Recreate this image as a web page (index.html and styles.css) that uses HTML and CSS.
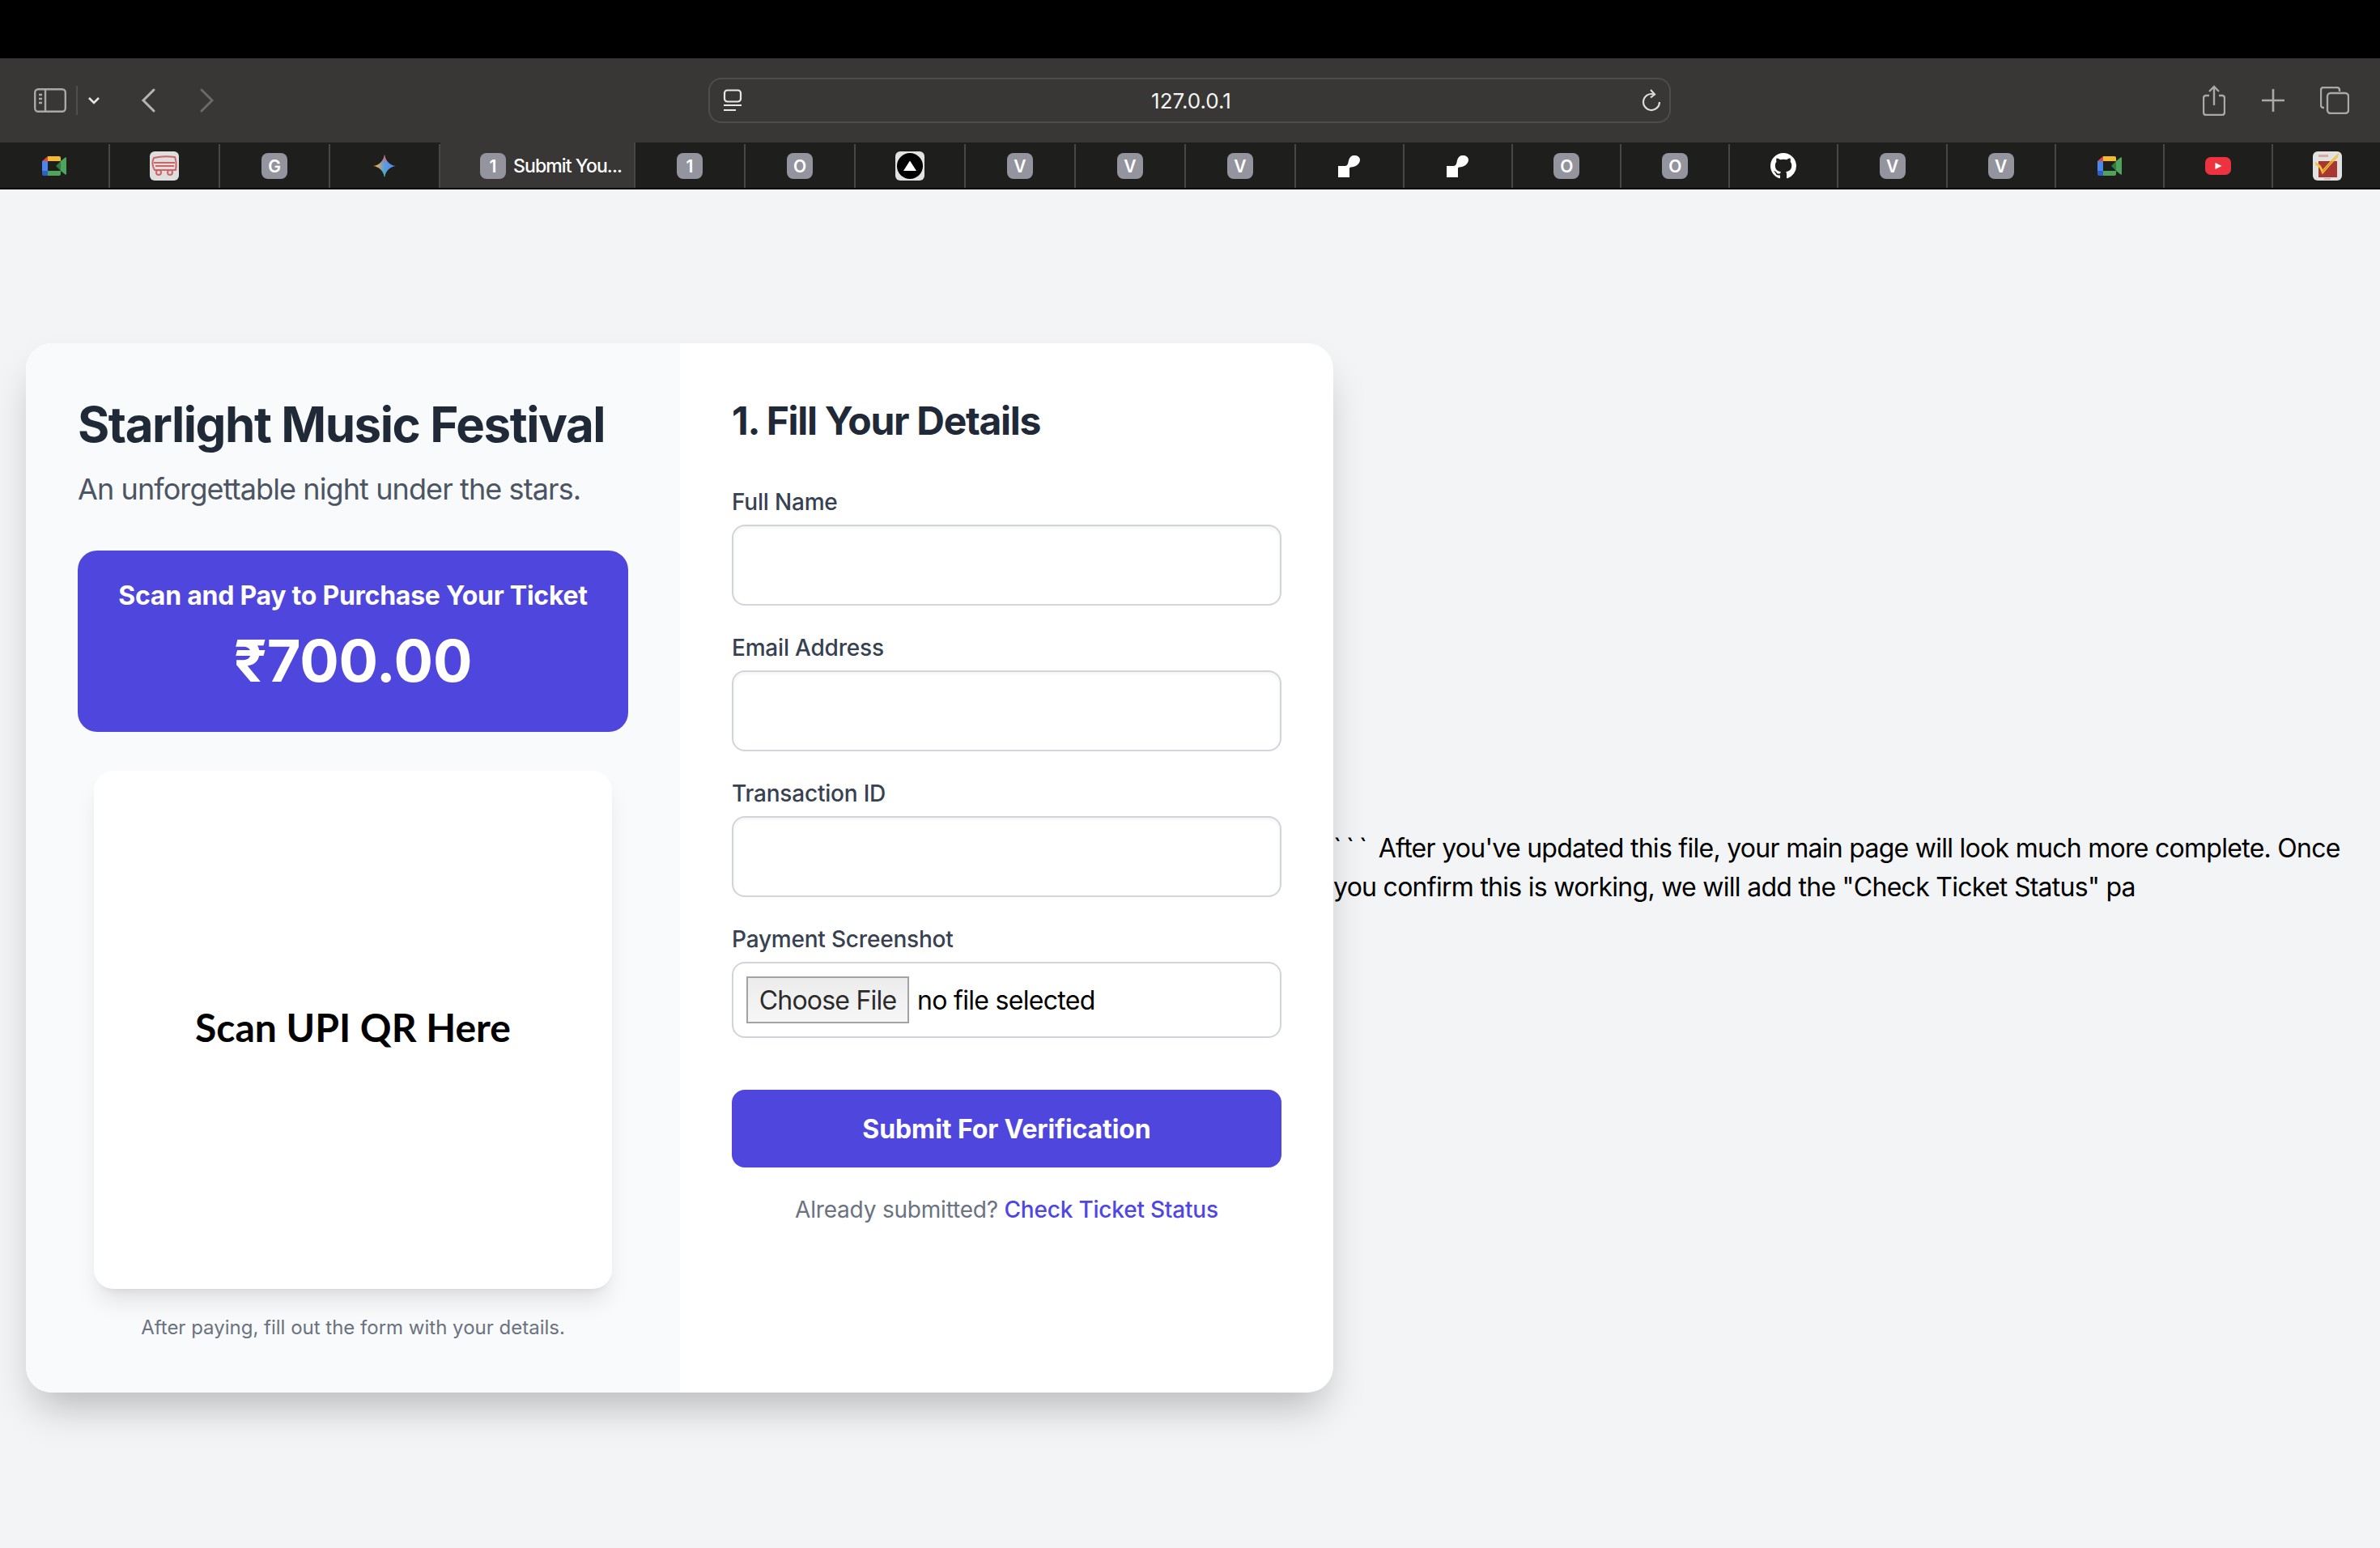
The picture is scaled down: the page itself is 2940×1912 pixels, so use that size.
FILE: index.html
```html
<!DOCTYPE html>
<html>

<head>
  <meta charset="utf-8" />
  <title>Starlight Music Festival</title>
  <link rel="stylesheet" href="styles.css">
</head>

<body>
  <svg class="sprites" xmlns="http://www.w3.org/2000/svg">
    <symbol id="meet" viewBox="0 0 30 24">
      <path fill="#e2483a" d="M7 0 0 6h7z" />
      <path fill="#f5bb2c" d="M7 0h14a2 2 0 0 1 2 2v4H7z" />
      <path fill="#4a86ee" d="M0 6h7v12H0z" />
      <path fill="#2f5fc4" d="M0 18h7v6H2a2 2 0 0 1-2-2z" />
      <path fill="#4ea45a" d="M7 18h16v4a2 2 0 0 1-2 2H7z" />
      <path fill="#2f7d42" d="m17 12 6-6v12z" />
      <path fill="#4ea45a" d="m23 6 5.500-4.500c.7-.5 1.500-.2 1.500.7v19.600c0 .9-.8 1.200-1.500.7L23 18z" />
    </symbol>
    <symbol id="notion" viewBox="0 0 28 27">
      <path fill="#fff" d="M17 .5c-3 1.500-4 5-4.500 8-.4 2.500-1.500 4-3.500 4.500H0v14h14V16c0-1 1-1.500 2-1.500 5 0 11-4 11-9C27 1.500 22-1.500 17 .5z" />
    </symbol>
  </svg>

  <header class="chrome">
    <div class="toolbar">
      <div class="nav-group">
        <svg class="ico-sidebar" viewBox="0 0 40 30" fill="none" stroke="#a9a9a7" stroke-width="2.4">
          <rect x="1.2" y="1.2" width="37.6" height="27.600" rx="4" />
          <path d="M14 1.200v27.600M6 8h4M6 13h4M6 18h4" />
        </svg>
        <span class="nav-divider"></span>
        <svg class="ico-down" viewBox="0 0 16 10" fill="none" stroke="#e6e6e4" stroke-width="2.6">
          <path d="m2 2 6 6 6-6" />
        </svg>
        <svg class="ico-back" viewBox="0 0 18 30" fill="none" stroke="#b5b5b3" stroke-width="3" stroke-linecap="round">
          <path d="M16 2 3 15l13 13" />
        </svg>
        <svg class="ico-forward" viewBox="0 0 18 30" fill="none" stroke="#6a6a68" stroke-width="3" stroke-linecap="round">
          <path d="m2 2 13 13L2 28" />
        </svg>
      </div>

      <div class="url-bar">
        <svg class="ico-reader" viewBox="0 0 24 28" fill="none" stroke="#e8e8e6" stroke-width="2.2">
          <rect x="2" y="1.5" width="20" height="14" rx="3.5" />
          <path d="M1 20h22M1 26h15" />
        </svg>
        <span class="url-text">127.0.0.1</span>
        <svg class="ico-reload" viewBox="0 0 24 28" fill="none" stroke="#dcdcda" stroke-width="2.2">
          <path d="M15 6.500A10 10 0 1 0 22 16" />
          <path d="m11 1 5 5.500-5 4" />
        </svg>
      </div>

      <div class="actions">
        <svg class="ico-share" viewBox="0 0 28 38" fill="none" stroke="#a9a9a7" stroke-width="2.4">
          <path d="M14 25V2M8 8l6-6 6 6" />
          <path d="M8 13H4a3 3 0 0 0-3 3v18a3 3 0 0 0 3 3h20a3 3 0 0 0 3-3V16a3 3 0 0 0-3-3h-4" />
        </svg>
        <svg class="ico-plus" viewBox="0 0 28 28" fill="none" stroke="#a9a9a7" stroke-width="2.6">
          <path d="M14 0v28M0 14h28" />
        </svg>
        <svg class="ico-tabs" viewBox="0 0 36 34" fill="none" stroke="#a9a9a7" stroke-width="2.4">
          <path d="M5 26H4a3 3 0 0 1-3-3V4a3 3 0 0 1 3-3h17a3 3 0 0 1 3 3v2" />
          <rect x="9" y="8" width="26" height="25" rx="4" />
        </svg>
      </div>
    </div>

    <nav class="tabs">
      <div class="tab"><svg class="fav-meet"><use href="#meet" /></svg></div>
      <div class="tab">
        <svg class="fav-tile" viewBox="0 0 36 36">
          <rect width="36" height="36" rx="6" fill="#dedede" />
          <g fill="none" stroke="#d06464" stroke-width="2">
            <path d="M5 8c8-2 18-2 26-1 2 5 2 10 1 16H6C3 18 3 12 5 8z" />
            <path d="M5 14h26M7 18h23" />
            <circle cx="11" cy="26" r="3" />
            <circle cx="25" cy="26" r="3" />
          </g>
        </svg>
      </div>
      <div class="tab"><span class="badge">G</span></div>
      <div class="tab">
        <svg class="fav-gemini" viewBox="0 0 28 28">
          <defs>
            <linearGradient id="gem-h">
              <stop offset="0.1" stop-color="#f2b33d" />
              <stop offset="0.5" stop-color="#5a9be8" />
              <stop offset="1" stop-color="#4f86ec" />
            </linearGradient>
            <linearGradient id="gem-v" x1="0" y1="0" x2="0" y2="1">
              <stop offset="0.05" stop-color="#e8655a" />
              <stop offset="0.4" stop-color="#e8655a" stop-opacity="0" />
              <stop offset="0.6" stop-color="#3fb8a0" stop-opacity="0" />
              <stop offset="0.95" stop-color="#3fb8a0" />
            </linearGradient>
          </defs>
          <path fill="url(#gem-h)" d="M14 0c1 7 6 13 14 14-8 1-13 7-14 14-1-7-6-13-14-14C8 13 13 7 14 0z" />
          <path fill="url(#gem-v)" d="M14 0c1 7 6 13 14 14-8 1-13 7-14 14-1-7-6-13-14-14C8 13 13 7 14 0z" />
        </svg>
      </div>
      <div class="tab tab-active"><span class="badge">1</span><span class="tab-title">Submit You...</span></div>
      <div class="tab"><span class="badge">1</span></div>
      <div class="tab"><span class="badge">O</span></div>
      <div class="tab">
        <svg class="fav-tile" viewBox="0 0 36 36">
          <rect width="36" height="36" rx="6" fill="#e2e2e2" />
          <circle cx="18" cy="18" r="16" fill="#000" />
          <path fill="#fff" d="M18 11.500 26 24H10z" />
        </svg>
      </div>
      <div class="tab"><span class="badge">V</span></div>
      <div class="tab"><span class="badge">V</span></div>
      <div class="tab"><span class="badge">V</span></div>
      <div class="tab tab-narrow"><svg class="fav-notion"><use href="#notion" /></svg></div>
      <div class="tab tab-narrow"><svg class="fav-notion"><use href="#notion" /></svg></div>
      <div class="tab tab-narrow"><span class="badge">O</span></div>
      <div class="tab tab-narrow"><span class="badge">O</span></div>
      <div class="tab tab-narrow">
        <svg class="fav-github" viewBox="0 0 16 16">
          <path fill="#fff" d="M8 0C3.58 0 0 3.58 0 8c0 3.54 2.29 6.53 5.47 7.59.4.07.55-.17.55-.38 0-.19-.01-.82-.01-1.49-2.01.37-2.53-.49-2.69-.94-.09-.23-.48-.94-.82-1.13-.28-.15-.68-.52-.01-.53.63-.01 1.08.58 1.23.82.72 1.21 1.87.87 2.33.66.07-.52.28-.87.51-1.07-1.78-.2-3.64-.89-3.64-3.95 0-.87.31-1.59.82-2.15-.08-.2-.36-1.02.08-2.12 0 0 .67-.21 2.2.82.64-.18 1.32-.27 2-.27.68 0 1.36.09 2 .27 1.53-1.04 2.2-.82 2.2-.82.44 1.1.16 1.92.08 2.12.51.56.82 1.27.82 2.15 0 3.07-1.87 3.75-3.65 3.95.29.25.54.73.54 1.48 0 1.07-.01 1.93-.01 2.2 0 .21.15.46.55.38A8.013 8.013 0 0016 8c0-4.42-3.58-8-8-8z" />
        </svg>
      </div>
      <div class="tab tab-narrow"><span class="badge">V</span></div>
      <div class="tab tab-narrow"><span class="badge">V</span></div>
      <div class="tab tab-narrow"><svg class="fav-meet"><use href="#meet" /></svg></div>
      <div class="tab tab-narrow">
        <svg class="fav-youtube" viewBox="0 0 32 22">
          <rect width="32" height="22" rx="7" fill="#ee3340" />
          <path fill="#fff" d="m12.500 7 8 4-8 4z" />
        </svg>
      </div>
      <div class="tab tab-narrow">
        <svg class="fav-tile" viewBox="0 0 36 36">
          <rect width="36" height="36" rx="6" fill="#e2e2e2" />
          <path fill="#a8372f" d="M7 12h23v20H7z" />
          <path fill="none" stroke="#f0c23c" stroke-width="1.5" d="M3 14c4 1 7 4 9 10C18 17 25 9 32 3M3 16c4 1 7 4 9 11C18 20 25 12 31 6" />
          <path fill="#d9a9a5" d="M7 4h12v3H7zM14 33h8v1.500h-8z" />
        </svg>
      </div>
    </nav>
  </header>

  <main class="page">
    <div class="card">
      <section class="info-panel">
        <h1 class="event-title">Starlight Music Festival</h1>
        <p class="event-sub">An unforgettable night under the stars.</p>

        <div class="price-box">
          <p class="price-label">Scan and Pay to Purchase Your Ticket</p>
          <p class="price-amount">₹700.00</p>
        </div>

        <div class="qr-box">Scan UPI QR Here</div>
        <p class="qr-note">After paying, fill out the form with your details.</p>
      </section>

      <section class="form-panel">
        <h2 class="form-title">1. Fill Your Details</h2>
        <form>
          <label class="field-label">Full Name</label>
          <input class="field-input" type="text" />
          <label class="field-label">Email Address</label>
          <input class="field-input" type="email" />
          <label class="field-label">Transaction ID</label>
          <input class="field-input" type="text" />
          <label class="field-label">Payment Screenshot</label>
          <div class="file-field">
            <button class="file-btn" type="button">Choose File</button>
            <span class="file-name">no file selected</span>
          </div>
          <button class="submit-btn" type="button">Submit For Verification</button>
        </form>
        <p class="status-line">Already submitted? <a class="status-link" href="#">Check Ticket Status</a></p>
      </section>
    </div>

    <p class="stray-text"><span class="ticks">```</span> After you've updated this file, your main page will look much more complete. Once<br />
      you confirm this is working, we will add the "Check Ticket Status" pa</p>
  </main>
</body>

</html>
```

FILE: styles.css
```css
* {
  box-sizing: border-box;
}

html,
body {
  height: 100%;
}

body {
  margin: 0;
  display: flex;
  flex-direction: column;
  background-color: #f3f4f6;
  font-family: Inter, "Noto Sans", sans-serif;
  color: #000;
}

.sprites {
  display: none;
}

/* browser chrome */
.chrome {
  flex: none;
  padding-top: 72px;
  background-color: #000;
}

.toolbar {
  display: grid;
  grid-template-columns: 875px 1189px 1fr;
  align-items: center;
  height: 104px;
  background-color: #383735;
}

.nav-group {
  display: flex;
  align-items: center;
  padding-left: 42px;
}

.ico-sidebar {
  width: 40px;
  height: 30px;
}

.nav-divider {
  width: 2px;
  height: 36px;
  margin: 0 12px;
  background-color: #4f4e4c;
}

.ico-down {
  width: 16px;
  height: 10px;
}

.ico-back {
  width: 18px;
  height: 30px;
  margin-left: 50px;
}

.ico-forward {
  width: 18px;
  height: 30px;
  margin-left: 55px;
}

.url-bar {
  display: flex;
  align-items: center;
  height: 56px;
  padding: 0 10px 0 16px;
  border: 2px solid #4e4d4b;
  border-radius: 16px;
}

.ico-reader,
.ico-reload {
  flex: none;
  width: 24px;
  height: 28px;
}

.url-text {
  flex: 1;
  padding-right: 2px;
  text-align: center;
  font-size: 26px;
  color: #f4f4f3;
}

.actions {
  display: flex;
  align-items: center;
  padding-left: 657px;
}

.ico-share {
  width: 28px;
  height: 38px;
}

.ico-plus {
  width: 28px;
  height: 28px;
  margin-left: 45px;
}

.ico-tabs {
  width: 36px;
  height: 34px;
  margin-left: 44px;
}

/* tab strip */
.tabs {
  display: flex;
  height: 58px;
  background-color: #1e1e1d;
  border-bottom: 2px solid #000;
}

.tab {
  flex: none;
  display: flex;
  align-items: center;
  justify-content: center;
  width: 136px;
  margin-top: 2px;
  border-right: 2px solid #474745;
}

.tab-narrow {
  width: 134.1px;
}

.tab-narrow:last-child {
  border-right: none;
}

.tab-active {
  width: 241px;
  margin-top: 0;
  padding-top: 2px;
  justify-content: flex-start;
  padding-left: 49px;
  background-color: #383735;
}

.tab-title {
  margin-left: 9px;
  font-size: 23px;
  font-weight: 500;
  letter-spacing: -0.9px;
  color: #fff;
}

.badge {
  display: flex;
  align-items: center;
  justify-content: center;
  width: 32px;
  height: 32px;
  border-radius: 8px;
  background-color: #94949f;
  font-size: 21px;
  font-weight: 600;
  color: #fff;
}

.fav-meet {
  width: 30px;
  height: 24px;
}

.fav-tile {
  width: 36px;
  height: 36px;
}

.fav-gemini {
  width: 28px;
  height: 28px;
}

.fav-notion {
  width: 28px;
  height: 27px;
}

.fav-github {
  width: 32px;
  height: 32px;
}

.fav-youtube {
  width: 32px;
  height: 22px;
}

/* page */
.page {
  flex: 1;
  display: flex;
  align-items: center;
  padding: 0 0 2px 32px;
}

.card {
  flex: none;
  display: grid;
  grid-template-columns: 808px 807px;
  width: 1615px;
  border-radius: 32px;
  background-color: #fff;
  box-shadow: 0 28px 50px -12px rgba(0, 0, 0, 0.25);
}

.info-panel {
  padding: 64px;
  border-radius: 32px 0 0 32px;
  background-color: #f9fafb;
}

.event-title {
  margin: 0;
  font-size: 60px;
  line-height: 72px;
  font-weight: 700;
  letter-spacing: -1.45px;
  color: #1f2937;
}

.event-sub {
  margin: 16px 0 0;
  font-size: 36px;
  line-height: 56px;
  letter-spacing: -0.9px;
  color: #4b5563;
}

.price-box {
  margin-top: 48px;
  padding: 32px 32px 48px;
  border-radius: 24px;
  background-color: #4f46dd;
  text-align: center;
  color: #fff;
}

.price-label {
  margin: 0;
  font-size: 32px;
  line-height: 48px;
  font-weight: 700;
  letter-spacing: -0.25px;
}

.price-amount {
  margin: 16px 0 0;
  font-size: 72px;
  line-height: 80px;
  font-weight: 700;
  letter-spacing: -0.2px;
}

.qr-box {
  display: flex;
  align-items: center;
  justify-content: center;
  width: 640px;
  height: 640px;
  margin: 48px auto 0;
  padding-bottom: 8px;
  border-radius: 24px;
  background-color: #fff;
  box-shadow: 0 20px 30px -6px rgba(0, 0, 0, 0.1), 0 8px 12px -8px rgba(0, 0, 0, 0.1);
  font-family: Lato, sans-serif;
  font-size: 48px;
  font-weight: 700;
}

.qr-note {
  margin: 32px 0 0;
  font-size: 24px;
  line-height: 32px;
  text-align: center;
  color: #6b7280;
}

.form-panel {
  padding: 64px;
}

.form-title {
  margin: 0 0 48px;
  font-size: 48px;
  line-height: 64px;
  font-weight: 700;
  letter-spacing: -1.3px;
  color: #1f2937;
}

.field-label {
  display: block;
  margin-bottom: 8px;
  font-size: 28px;
  line-height: 40px;
  font-weight: 500;
  letter-spacing: -0.2px;
  color: #374151;
}

.field-input {
  display: block;
  width: 100%;
  height: 100px;
  margin-bottom: 32px;
  border: 2px solid #d1d5db;
  border-radius: 16px;
  background-color: #fff;
  box-shadow: inset 0 2px 4px rgba(0, 0, 0, 0.05);
}

.file-field {
  display: flex;
  align-items: center;
  height: 94px;
  padding-left: 16px;
  border: 2px solid #d1d5db;
  border-radius: 16px;
}

.file-btn {
  width: 201px;
  height: 58px;
  padding: 0;
  border: 2px solid #a3a3a3;
  background: linear-gradient(#ececec, #f6f6f6);
  font-family: inherit;
  font-size: 32px;
  letter-spacing: -0.8px;
  color: #2b2b2b;
}

.file-name {
  margin-left: 10px;
  font-size: 32px;
  letter-spacing: -0.7px;
}

.submit-btn {
  display: block;
  width: 100%;
  height: 96px;
  margin-top: 64px;
  border: none;
  border-radius: 16px;
  background-color: #4f46dd;
  font-family: inherit;
  font-size: 32px;
  font-weight: 700;
  letter-spacing: -0.1px;
  color: #fff;
}

.status-line {
  margin: 32px 0 0;
  font-size: 28px;
  line-height: 40px;
  letter-spacing: -0.2px;
  text-align: center;
  color: #6b7280;
}

.status-link {
  font-weight: 500;
  color: #4f46e5;
  text-decoration: none;
}

.stray-text {
  margin: 0;
  font-size: 32px;
  line-height: 48px;
  letter-spacing: -0.72px;
}

.ticks {
  letter-spacing: 5.5px;
}
```
